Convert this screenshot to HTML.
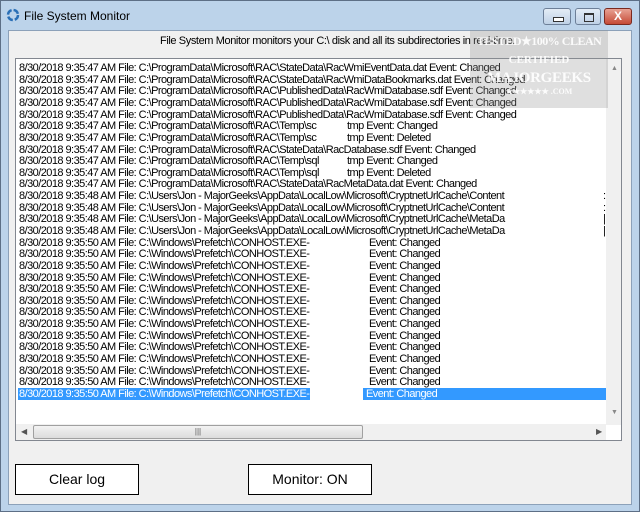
<!DOCTYPE html>
<html><head><style>
body{margin:0;width:640px;height:515px;overflow:hidden;background:#fff;font-family:"Liberation Sans",sans-serif;position:relative}
.frame{position:absolute;left:0;top:0;width:640px;height:512px;background:#bcd3ea;border:1px solid #5d6f86;box-sizing:border-box}
.title{position:absolute;left:24px;top:9px;font-size:12px;color:#000}
.client{position:absolute;left:8px;top:30px;width:624px;height:475px;background:#f0f0f0;border:1px solid #8ca1b9;box-sizing:border-box}
.desc{position:absolute;left:160px;top:35px;font-size:11px;letter-spacing:-0.4px}
.list{position:absolute;left:15px;top:58px;width:607px;height:383px;background:#fff;border:1px solid #828790;box-sizing:border-box;overflow:hidden}
.r{position:absolute;left:3px;font-size:11px;letter-spacing:-0.55px;white-space:pre;line-height:12px;color:#000}
.e{position:absolute;left:350px}
.hl{background:#3399ff;color:#fff}
.vs{position:absolute;left:590px;top:0;width:16px;height:366px;background:#f0f0f0}
.hs{position:absolute;left:0;top:365px;width:590px;height:17px;background:#f0f0f0}
.thumb{position:absolute;left:17px;top:1px;width:330px;height:14px;background:linear-gradient(#f3f3f3,#dcdcdc);border:1px solid #a0a0a0;border-radius:2px;box-sizing:border-box;font-size:8px;text-align:center;line-height:12px;color:#555}
.btn{position:absolute;top:464px;width:124px;height:31px;border:1px solid #000;background:#fff;box-sizing:border-box;font-size:14px;text-align:center;line-height:29px}
.wb{position:absolute;top:8px;height:17px;border:1px solid #6d7f98;border-radius:3px;box-sizing:border-box;background:linear-gradient(#e3ecf6,#bfd1e6)}
.wm{position:absolute;left:470px;top:30px;width:138px;height:78px;background:rgba(150,150,150,0.3);color:rgba(255,255,255,0.9);font-family:"Liberation Serif",serif;font-weight:bold;text-align:center;white-space:nowrap;overflow:hidden}
</style></head><body>
<div class="frame"></div>
<svg style="position:absolute;left:6px;top:8px" width="14" height="14" viewBox="0 0 14 14"><circle cx="7" cy="7" r="5" fill="none" stroke="#2a6fb6" stroke-width="2.5" stroke-dasharray="6 2"/></svg>
<div class="title">File System Monitor</div>
<div class="wb" style="left:543px;width:28px"><div style="position:absolute;left:9px;top:8px;width:9px;height:3px;border:1px solid #333;background:#fff"></div></div>
<div class="wb" style="left:575px;width:26px"><div style="position:absolute;left:8px;top:4px;width:8px;height:6px;border:1px solid #333;border-top-width:2px"></div></div>
<div class="wb" style="left:604px;width:28px;background:linear-gradient(#e8a294,#c54a36);border-color:#7a2a20;color:#fff;font-size:12px;font-weight:bold;text-align:center;line-height:15px">X</div>
<div class="client"></div>
<div class="desc">File System Monitor monitors your C:\ disk and all its subdirectories in real-time.</div>
<div class="list">
<div class="r" style="top:3px">8/30/2018 9:35:47 AM File: C:\ProgramData\Microsoft\RAC\StateData\RacWmiEventData.dat Event: Changed</div>
<div class="r" style="top:14.6px">8/30/2018 9:35:47 AM File: C:\ProgramData\Microsoft\RAC\StateData\RacWmiDataBookmarks.dat Event: Changed</div>
<div class="r" style="top:26.3px">8/30/2018 9:35:47 AM File: C:\ProgramData\Microsoft\RAC\PublishedData\RacWmiDatabase.sdf Event: Changed</div>
<div class="r" style="top:37.9px">8/30/2018 9:35:47 AM File: C:\ProgramData\Microsoft\RAC\PublishedData\RacWmiDatabase.sdf Event: Changed</div>
<div class="r" style="top:49.6px">8/30/2018 9:35:47 AM File: C:\ProgramData\Microsoft\RAC\PublishedData\RacWmiDatabase.sdf Event: Changed</div>
<div class="r" style="top:61.2px">8/30/2018 9:35:47 AM File: C:\ProgramData\Microsoft\RAC\Temp\sc<span style="position:absolute;left:328px">tmp Event: Changed</span></div>
<div class="r" style="top:72.8px">8/30/2018 9:35:47 AM File: C:\ProgramData\Microsoft\RAC\Temp\sc<span style="position:absolute;left:328px">tmp Event: Deleted</span></div>
<div class="r" style="top:84.5px">8/30/2018 9:35:47 AM File: C:\ProgramData\Microsoft\RAC\StateData\RacDatabase.sdf Event: Changed</div>
<div class="r" style="top:96.1px">8/30/2018 9:35:47 AM File: C:\ProgramData\Microsoft\RAC\Temp\sql<span style="position:absolute;left:328px">tmp Event: Changed</span></div>
<div class="r" style="top:107.8px">8/30/2018 9:35:47 AM File: C:\ProgramData\Microsoft\RAC\Temp\sql<span style="position:absolute;left:328px">tmp Event: Deleted</span></div>
<div class="r" style="top:119.4px">8/30/2018 9:35:47 AM File: C:\ProgramData\Microsoft\RAC\StateData\RacMetaData.dat Event: Changed</div>
<div class="r" style="top:131px">8/30/2018 9:35:48 AM File: C:\Users\Jon - MajorGeeks\AppData\LocalLow\Microsoft\CryptnetUrlCache\Content<span style="position:absolute;left:584px">:</span></div>
<div class="r" style="top:142.7px">8/30/2018 9:35:48 AM File: C:\Users\Jon - MajorGeeks\AppData\LocalLow\Microsoft\CryptnetUrlCache\Content<span style="position:absolute;left:584px">:</span></div>
<div class="r" style="top:154.3px">8/30/2018 9:35:48 AM File: C:\Users\Jon - MajorGeeks\AppData\LocalLow\Microsoft\CryptnetUrlCache\MetaDa<span style="position:absolute;left:584px">|</span></div>
<div class="r" style="top:166px">8/30/2018 9:35:48 AM File: C:\Users\Jon - MajorGeeks\AppData\LocalLow\Microsoft\CryptnetUrlCache\MetaDa<span style="position:absolute;left:584px">|</span></div>
<div class="r" style="top:177.6px">8/30/2018 9:35:50 AM File: C:\Windows\Prefetch\CONHOST.EXE-<span class="e">Event: Changed</span></div>
<div class="r" style="top:189.2px">8/30/2018 9:35:50 AM File: C:\Windows\Prefetch\CONHOST.EXE-<span class="e">Event: Changed</span></div>
<div class="r" style="top:200.9px">8/30/2018 9:35:50 AM File: C:\Windows\Prefetch\CONHOST.EXE-<span class="e">Event: Changed</span></div>
<div class="r" style="top:212.5px">8/30/2018 9:35:50 AM File: C:\Windows\Prefetch\CONHOST.EXE-<span class="e">Event: Changed</span></div>
<div class="r" style="top:224.2px">8/30/2018 9:35:50 AM File: C:\Windows\Prefetch\CONHOST.EXE-<span class="e">Event: Changed</span></div>
<div class="r" style="top:235.8px">8/30/2018 9:35:50 AM File: C:\Windows\Prefetch\CONHOST.EXE-<span class="e">Event: Changed</span></div>
<div class="r" style="top:247.4px">8/30/2018 9:35:50 AM File: C:\Windows\Prefetch\CONHOST.EXE-<span class="e">Event: Changed</span></div>
<div class="r" style="top:259.1px">8/30/2018 9:35:50 AM File: C:\Windows\Prefetch\CONHOST.EXE-<span class="e">Event: Changed</span></div>
<div class="r" style="top:270.7px">8/30/2018 9:35:50 AM File: C:\Windows\Prefetch\CONHOST.EXE-<span class="e">Event: Changed</span></div>
<div class="r" style="top:282.4px">8/30/2018 9:35:50 AM File: C:\Windows\Prefetch\CONHOST.EXE-<span class="e">Event: Changed</span></div>
<div class="r" style="top:294px">8/30/2018 9:35:50 AM File: C:\Windows\Prefetch\CONHOST.EXE-<span class="e">Event: Changed</span></div>
<div class="r" style="top:305.6px">8/30/2018 9:35:50 AM File: C:\Windows\Prefetch\CONHOST.EXE-<span class="e">Event: Changed</span></div>
<div class="r" style="top:317.3px">8/30/2018 9:35:50 AM File: C:\Windows\Prefetch\CONHOST.EXE-<span class="e">Event: Changed</span></div>
<div class="r hl" style="top:328.9px;left:2px;width:291px;padding-left:1px">8/30/2018 9:35:50 AM File: C:\Windows\Prefetch\CONHOST.EXE-</div>
<div class="r hl" style="top:328.9px;left:347px;width:243px;padding-left:3px">Event: Changed</div>
<div class="vs"><div style="position:absolute;left:5px;top:6px;font-size:7px;color:#888">▲</div><div style="position:absolute;left:5px;top:350px;font-size:7px;color:#888">▼</div></div>
<div class="hs"><div style="position:absolute;left:5px;top:3px;font-size:8px;color:#555">◀</div><div class="thumb">|||</div><div style="position:absolute;left:580px;top:3px;font-size:8px;color:#555">▶</div></div>
</div>
<div class="wm"><div style="font-size:12px;margin-top:4px;letter-spacing:-0.5px">TESTED★100% CLEAN</div><div style="font-size:11px;margin-top:5px">CERTIFIED</div><div style="font-size:15px;margin-top:4px;letter-spacing:-0.3px">MAJORGEEKS</div><div style="font-size:8px">★★★★★★ .COM</div></div>
<div class="btn" style="left:15px">Clear log</div>
<div class="btn" style="left:248px">Monitor: ON</div>
</body></html>
